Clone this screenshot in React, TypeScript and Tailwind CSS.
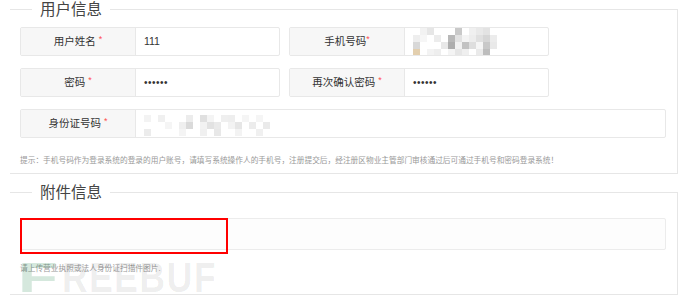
const font = "font-['Liberation_Sans','Noto_Sans_CJK_SC',sans-serif]";

// mosaic colours (privacy blur from the screenshot)
const phoneCells = [
  "#fff", "#f2f2f2", "#e6e6e6", "#fff", "#fff", "#fff", "#c9c9c9", "#fff", "#f0f0f0", "#e9e9e9", "#e3e3e3", "#fff", "#fff",
  "#eee", "#f6f6f6", "#fff", "#ececec", "#fff", "#b8b8b8", "#e2e2e2", "#f4f4f4", "#ededed", "#e0e0e0", "#d6d6d6", "#ececec", "#fff",
  "#d8d8d8", "#fff", "#fff", "#fff", "#e8e8e8", "#adadad", "#f1f1f1", "#c2c2c2", "#dedede", "#f5f5f5", "#c8c8c8", "#e9e9e9", "#fff",
  "#e3cfae", "#fff", "#f3f3f3", "#eee", "#fff", "#f4f4f4", "#e6e6e6", "#efefef", "#fff", "#eaeaea", "#bdbdbd", "#fff", "#fff",
];

const idCells = [
  "#f3f3f3", "#fff", "#f0f0f0", "#fff", "#fff", "#fff", "#ececec", "#fff", "#e0e0e0", "#f4f4f4", "#fff", "#efefef", "#eeeeee", "#fff", "#f5f5f5", "#fff", "#f5f5f5", "#fff", "#fff", "#fff",
  "#fff", "#fff", "#fff", "#f5f5f5", "#fff", "#efefef", "#dadada", "#fff", "#f2f2f2", "#e2e2e2", "#eaeaea", "#fff", "#f3f3f3", "#e6e6e6", "#fff", "#ececec", "#fff", "#eaeaea", "#fff", "#fff",
  "#ececec", "#fff", "#fff", "#fff", "#fff", "#f4f4f4", "#fff", "#fff", "#f0f0f0", "#fff", "#e8e8e8", "#fff", "#fff", "#f3f3f3", "#fff", "#fff", "#f0f0f0", "#fff", "#fff", "#fff",
];

function Mosaic({ cells, cols, size }: { cells: string[]; cols: number; size: number }) {
  return (
    <div
      className="grid"
      style={{ gridTemplateColumns: `repeat(${cols}, ${size}px)`, gridAutoRows: `${size}px` }}
    >
      {cells.map((c, i) => (
        <div key={i} style={{ backgroundColor: c }} />
      ))}
    </div>
  );
}

function Field({
  label,
  star = "space",
  width,
  children,
}: {
  label: string;
  star?: "space" | "tight";
  width: string;
  children?: React.ReactNode;
}) {
  return (
    <div className={`flex h-[29px] ${width} rounded-[2px] border border-[#e8e8e8] bg-white`}>
      <div className="flex w-[115px] shrink-0 items-center justify-center border-r border-[#e8e8e8] bg-[#f7f7f7] text-[10.5px] text-[#333]">
        {label}
        <span
          className={`relative -top-[2px] text-[9px] text-[#ff4d4f] ${star === "space" ? "ml-[3px]" : ""}`}
        >
          *
        </span>
      </div>
      <div className="flex flex-1 items-center overflow-hidden pl-[8px] text-[10.5px] text-[#333]">
        {children}
      </div>
    </div>
  );
}

function Dots() {
  return <span className="text-[10px] tracking-[0.5px] text-[#333]">••••••</span>;
}

export default function App() {
  return (
    <div className={`relative h-[302px] w-[690px] overflow-hidden bg-white ${font}`}>
      <fieldset className="relative ml-[10px] w-[668px] border-0 border-t border-r border-b border-[#e6e6e6] pb-[7px] pl-[10px] pr-[11px] pt-[8px]">
        <legend className="ml-[12px] px-[8px] text-[15.5px] font-normal leading-[19px] text-[#444]">用户信息</legend>
        <div className="flex flex-col gap-[12px]">
          <div className="flex gap-[9px]">
            <Field label="用户姓名" width="w-[260px]">111</Field>
            <Field label="手机号码" star="tight" width="w-[260px]">
              <Mosaic cells={phoneCells} cols={13} size={7} />
            </Field>
          </div>
          <div className="flex gap-[9px]">
            <Field label="密码" width="w-[260px]">
              <Dots />
            </Field>
            <Field label="再次确认密码" width="w-[260px]">
              <Dots />
            </Field>
          </div>
          <Field label="身份证号码" width="w-full">
            <div className="pt-[4px]">
              <Mosaic cells={idCells} cols={20} size={7} />
            </div>
          </Field>
        </div>
        <p className="mt-[18px] text-[7.7px] leading-[10px] text-[#999]">
          提示：手机号码作为登录系统的登录的用户账号，请填写系统操作人的手机号，注册提交后，经注册区物业主管部门审核通过后可通过手机号和密码登录系统！
        </p>
      </fieldset>

      <fieldset className="relative ml-[10px] mt-[9px] w-[668px] border-0 border-t border-r border-b border-[#e6e6e6] pb-[20px] pl-[10px] pr-[11px] pt-[16px]">
        <legend className="ml-[12px] px-[8px] text-[15.5px] font-normal leading-[19px] text-[#444]">附件信息</legend>
        <div className="relative">
          <div className="h-[32px] w-full rounded-[2px] border border-[#ececec] bg-[#fdfdfd]" />
          {/* red annotation box */}
          <div className="absolute left-0 top-0 h-[36px] w-[208px] border-2 border-[#ff0000]" />
        </div>
        <p className="relative mt-[14px] text-[7.7px] leading-[10px] text-[#999]">请上传营业执照或法人身份证扫描件图片.</p>
      </fieldset>

      {/* watermark, semi-transparent over the page */}
      <div className="pointer-events-none absolute left-[18px] top-[256px] flex select-none font-bold">
        <span className="inline-block origin-left scale-x-[1.55] text-[42px] leading-[44px] text-[#2e8b57]/20">F</span>
        <span className="ml-[18px] inline-block origin-left scale-x-[0.84] text-[42px] leading-[44px] tracking-[2px] text-black/[0.08]">
          REEBUF
        </span>
      </div>
    </div>
  );
}
